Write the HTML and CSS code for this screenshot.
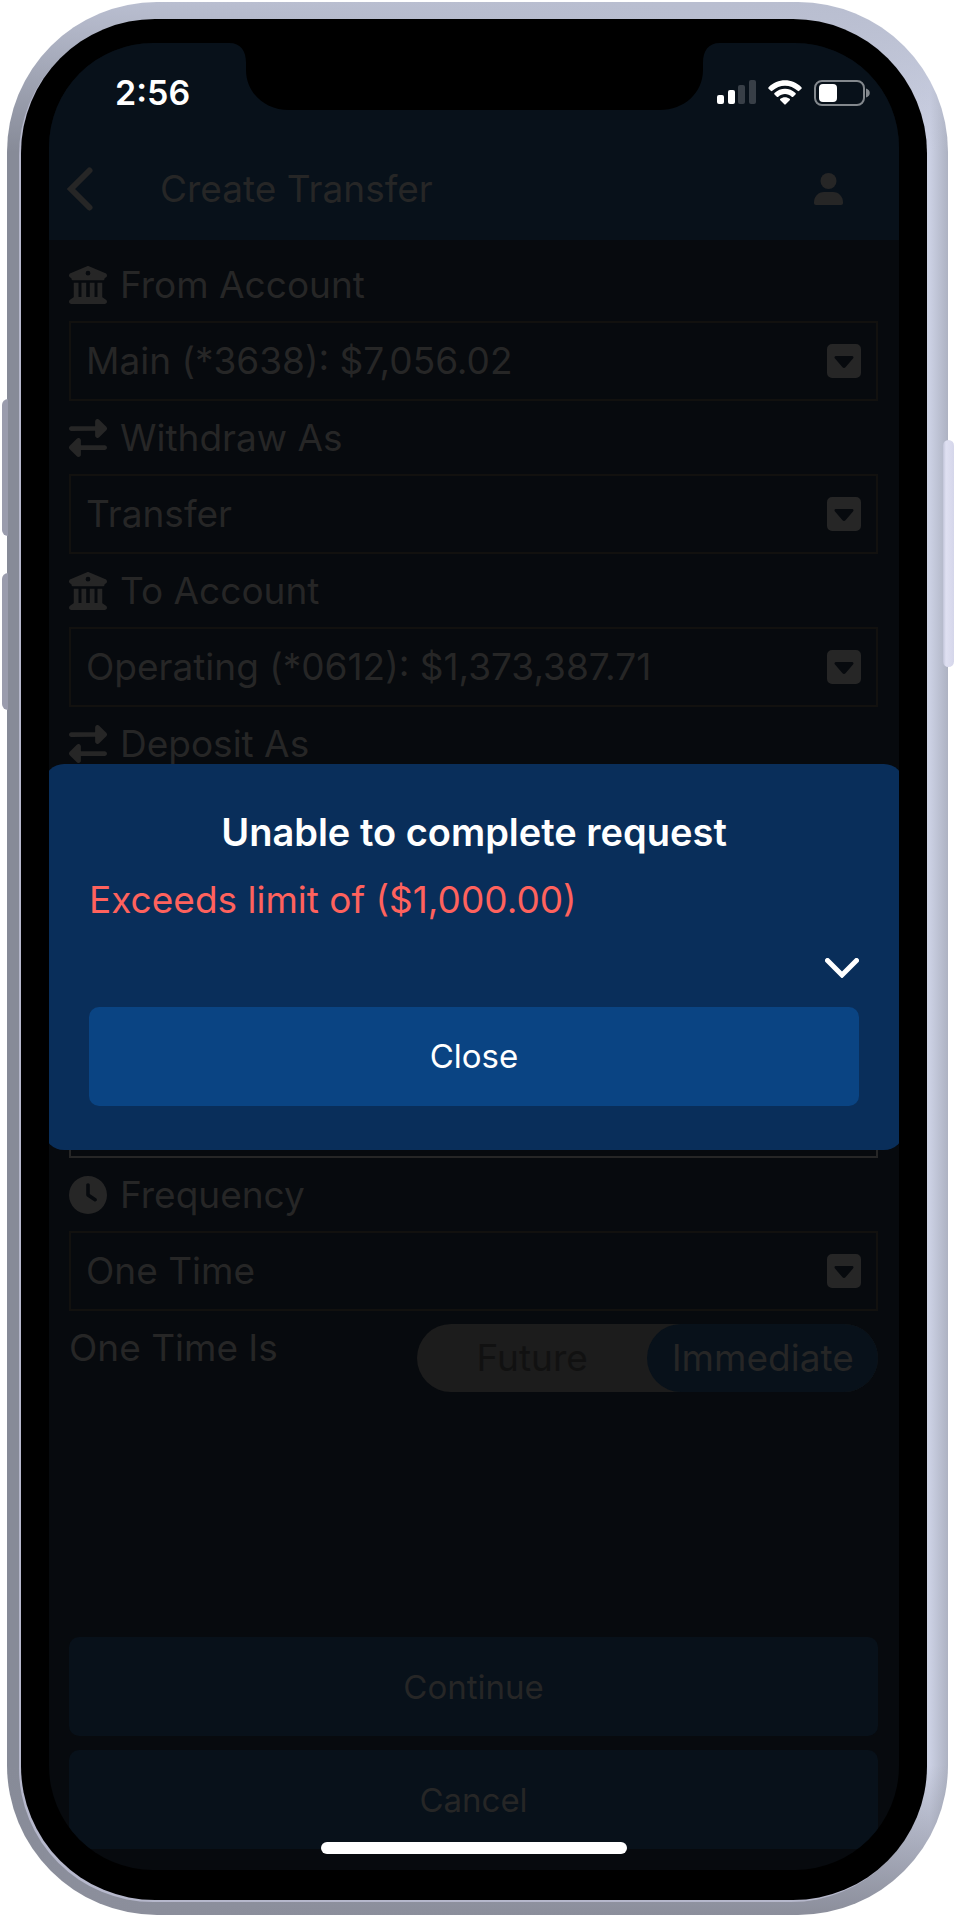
FILE: index.html
```html
<!DOCTYPE html>
<html lang="en">
<head>
	<meta charset="UTF-8">
	<meta name="viewport" content="width=device-width, initial-scale=1">
	<title>Create Transfer</title>
	<link rel="stylesheet" href="styles.css">
</head>
<body>
<!-- shared icons -->
<svg class="sprite" aria-hidden="true">
	<symbol id="bank" viewBox="0 0 512 512"><path d="M243.4 2.6l-224 96c-14 6-21.8 21-18.7 35.8S16.8 160 32 160v8c0 13.3 10.7 24 24 24H456c13.3 0 24-10.7 24-24v-8c15.2 0 28.3-10.7 31.3-25.6s-4.8-29.9-18.7-35.8l-224-96c-8-3.4-17.2-3.4-25.2 0zM128 224H64V420.3c-.6 .3-1.2 .7-1.8 1.1l-48 32c-11.7 7.8-17 22.4-12.9 35.9S17.9 512 32 512H480c14.1 0 26.5-9.2 30.6-22.7s-1.1-28.1-12.9-35.9l-48-32c-.6-.4-1.2-.7-1.8-1.1V224H384V416H344V224H280V416H232V224H168V416H128V224zM256 64a32 32 0 1 1 0 64 32 32 0 1 1 0-64z"/></symbol>
	<symbol id="swap" viewBox="0 0 512 512"><path d="M32 96l320 0 0-64c0-12.9 7.8-24.6 19.8-29.6s25.7-2.2 34.9 6.9l96 96c6 6 9.4 14.1 9.4 22.6s-3.4 16.6-9.4 22.6l-96 96c-9.2 9.2-22.9 11.9-34.9 6.9s-19.8-16.6-19.8-29.6l0-64L32 160c-17.7 0-32-14.3-32-32s14.3-32 32-32zM480 352c17.7 0 32 14.3 32 32s-14.3 32-32 32H160v64c0 12.9-7.8 24.6-19.8 29.6s-25.7 2.2-34.9-6.9l-96-96c-6-6-9.4-14.1-9.4-22.6s3.4-16.6 9.4-22.6l96-96c9.2-9.2 22.9-11.9 34.9-6.9s19.8 16.6 19.8 29.6l0 64H480z"/></symbol>
	<symbol id="clock" viewBox="0 0 512 512"><path d="M256 0a256 256 0 1 1 0 512A256 256 0 1 1 256 0zM232 120V256c0 8 4 15.5 10.7 20l96 64c11 7.4 25.9 4.4 33.3-6.7s4.4-25.9-6.7-33.3L280 243.2V120c0-13.3-10.7-24-24-24s-24 10.7-24 24z"/></symbol>
	<symbol id="caret" viewBox="0 0 34 34"><path fill-rule="evenodd" d="M5 0H29a5 5 0 0 1 5 5V29a5 5 0 0 1-5 5H5a5 5 0 0 1-5-5V5a5 5 0 0 1 5-5zM9 12C7.500 12 7 13.500 8 14.600L15.500 23.200C16.500 24.300 17.500 24.300 18.500 23.200L26 14.600C27 13.500 26.500 12 25 12z"/></symbol>
</svg>

<div class="phone">
	<span class="side_btn vol_up"></span>
	<span class="side_btn vol_down"></span>
	<span class="side_btn power"></span>
	<div class="bezel">
		<div class="screen">
			<div class="status">
				<span class="time">2:56</span>
				<svg class="notch" viewBox="0 0 491 67"><path d="M0 0C12 0 17 8 17 20V27C17 50 36 67 60 67H431C455 67 474 50 474 27V20C474 8 479 0 491 0z"/></svg>
				<div class="status_icons">
					<svg width="39" height="25" viewBox="0 0 39 25">
						<rect x="0" y="15" width="7" height="9" rx="2" fill="#fff"/>
						<rect x="11" y="10" width="7" height="14" rx="2" fill="#fff"/>
						<rect x="21" y="5" width="7" height="19" rx="2" fill="#383f47"/>
						<rect x="32" y="0" width="7" height="24" rx="2" fill="#383f47"/>
					</svg>
					<svg width="34" height="25" viewBox="0 0 34 25" fill="#fff">
						<path d="M0.600 7.200C9.500-2.100 24.500-2.100 33.400 7.200C33.900 7.700 33.900 8.200 33.400 8.700L31.200 10.800C30.700 11.300 30.200 11.300 29.700 10.800C22.500 3.900 11.500 3.900 4.300 10.800C3.800 11.300 3.300 11.300 2.800 10.800L0.600 8.700C0.100 8.200 0.100 7.700 0.600 7.200z"/>
						<path d="M6.500 13C12.400 7.200 21.600 7.200 27.500 13C28 13.500 28 14 27.500 14.500L25.200 16.700C24.700 17.100 24.200 17.100 23.700 16.700C19.900 13.200 14.100 13.200 10.300 16.700C9.800 17.100 9.300 17.100 8.800 16.700L6.500 14.500C6 14 6 13.500 6.500 13z"/>
						<path d="M12.300 18.800C15 16.600 19 16.600 21.700 18.800C22.200 19.300 22.200 19.800 21.700 20.300L17.700 24.300C17.200 24.800 16.800 24.800 16.300 24.300L12.300 20.300C11.800 19.800 11.800 19.300 12.300 18.800z"/>
					</svg>
					<svg width="56" height="26" viewBox="0 0 56 26">
						<rect x="1" y="1" width="49" height="24" rx="7" fill="none" stroke="#83888d" stroke-width="2"/>
						<rect x="5" y="4" width="18" height="18" rx="4" fill="#fff"/>
						<path d="M52 8.500C57 10 57 16 52 17.500z" fill="#83888d"/>
					</svg>
				</div>
			</div>

			<header class="header">
				<button class="icon_btn" type="button" aria-label="Back">
					<svg width="26" height="44" viewBox="0 0 26 44"><path d="M22.500 3.500L4 22L22.500 40.500" fill="none" stroke="#262626" stroke-width="6" stroke-linecap="round"/></svg>
				</button>
				<h1>Create Transfer</h1>
				<button class="icon_btn" type="button" aria-label="Profile">
					<svg width="29" height="32" viewBox="0 0 29 32" fill="#262626"><circle cx="14.500" cy="8" r="8"/><path d="M10 19H19C25 19 29 24 29 29V30C29 31.300 28.300 32 27 32H2C.7 32 0 31.300 0 30V29C0 24 4 19 10 19z"/></svg>
				</button>
			</header>

			<form class="form">
				<label class="label" for="from"><svg><use href="#bank"/></svg>From Account</label>
				<div class="select">
					<select id="from"><option>Main (*3638): $7,056.02</option></select>
					<svg><use href="#caret"/></svg>
				</div>
				<label class="label" for="withdraw"><svg><use href="#swap"/></svg>Withdraw As</label>
				<div class="select">
					<select id="withdraw"><option>Transfer</option></select>
					<svg><use href="#caret"/></svg>
				</div>
				<label class="label" for="to"><svg><use href="#bank"/></svg>To Account</label>
				<div class="select">
					<select id="to"><option>Operating (*0612): $1,373,387.71</option></select>
					<svg><use href="#caret"/></svg>
				</div>
				<label class="label" for="deposit"><svg><use href="#swap"/></svg>Deposit As</label>
				<div class="select">
					<select id="deposit"></select>
					<svg><use href="#caret"/></svg>
				</div>
				<textarea class="memo" aria-label="Memo"></textarea>
				<label class="label" for="frequency"><svg><use href="#clock"/></svg>Frequency</label>
				<div class="select">
					<select id="frequency"><option>One Time</option></select>
					<svg><use href="#caret"/></svg>
				</div>
				<div class="when">
					<span class="label" id="whenLabel">One Time Is</span>
					<div class="toggle" role="radiogroup" aria-labelledby="whenLabel">
						<input type="radio" name="when" id="future"><label for="future">Future</label>
						<input type="radio" name="when" id="immediate" checked><label for="immediate">Immediate</label>
					</div>
				</div>
				<div class="actions">
					<button class="btn" type="button">Continue</button>
					<button class="btn" type="button">Cancel</button>
				</div>
			</form>

			<div class="overlay">
				<div class="dialog" role="alertdialog" aria-labelledby="dialogTitle">
					<h2 id="dialogTitle">Unable to complete request</h2>
					<p>Exceeds limit of ($1,000.00)</p>
					<button class="icon_btn more" type="button" aria-label="Details">
						<svg width="34" height="20" viewBox="0 0 34 20"><path d="M2.500 2.500L17 17L31.500 2.500" fill="none" stroke="#fff" stroke-width="5" stroke-linecap="round"/></svg>
					</button>
					<button class="btn btn_close" type="button">Close</button>
				</div>
			</div>
			<span class="home"></span>
		</div>
	</div>
</div>
</body>
</html>
```

FILE: styles.css
```css
*{margin:0;padding:0;box-sizing:border-box;}
body{background:#fff;color:#262626;font-family:Inter,"Liberation Sans",sans-serif;font-size:37px;line-height:48px;}
button,select,textarea{font:inherit;color:inherit;border:0;background:none;}
svg{display:block;}
.sprite{position:absolute;width:0;height:0;}

/* handset */
.phone{position:relative;margin:2px 6px 4px 7px;padding:17px 21px 15px 14px;border-radius:150px;background:linear-gradient(to bottom,#b9bed0,rgba(185,190,208,0) 150px),linear-gradient(to top,#8b8e9b,rgba(139,142,155,0) 150px),linear-gradient(to right,#878b98 20px,#cbd0e3 calc(100% - 18px),#adb2c2);}
.bezel{padding:24px 28px 30px;border-radius:134px;background:#000;box-shadow:-2px 2px 0 #b6b8cc;}
.side_btn{position:absolute;border-radius:8px 0 0 8px;background:#9a9cad;left:-5px;width:6px;height:137px;}
.vol_up{top:397px;}
.vol_down{top:571px;}
.power{top:438px;left:auto;right:-6px;width:11px;height:227px;border-radius:6px;background:linear-gradient(to right,#c2c5da,#dfe0f2 3px,#d5d6ea);}

.screen{position:relative;display:flex;flex-direction:column;min-height:calc(100vh - 92px);border-radius:104px;overflow:hidden;background:#070a0e;}

/* status bar */
.status{display:grid;grid-template-columns:1fr 457px 1fr;height:67px;background:#08111a;}
.time{padding:26px 0 0 66px;color:#fff;font-size:34px;font-weight:600;line-height:48px;}
.notch{width:491px;height:67px;margin-left:-17px;}
.status_icons{display:flex;align-items:flex-start;gap:12px;padding:37px 0 0 14px;}

.header{display:flex;align-items:center;height:130px;padding:28px 56px 0 18px;background:#08111a;}
.header h1{flex:1;margin-left:67px;font-size:37px;font-weight:400;}
.icon_btn{cursor:pointer;}

/* form */
.form{flex:1;display:flex;flex-direction:column;padding:8px 21px 21px 20px;}
.label{display:flex;align-items:center;gap:13px;height:73px;}
.label svg{width:38px;height:38px;fill:#262626;}
.select{display:grid;align-items:center;}
.select select,.select svg{grid-area:1/1;}
.select select{width:100%;height:80px;padding:0 60px 0 15px;border:2px solid #12110f;appearance:none;}
.select svg{justify-self:end;width:34px;height:34px;margin-right:17px;fill:#262626;pointer-events:none;}
.memo{height:225px;margin-top:73px;border:2px solid #262626;resize:none;}

.when{display:flex;justify-content:space-between;}
.toggle{display:grid;grid-template-columns:1fr 1fr;width:57%;height:68px;margin-top:13px;border-radius:34px;background:#1c1c1c;color:#111;}
.toggle input{position:absolute;opacity:0;}
.toggle label{border-radius:34px;line-height:68px;text-align:center;}
.toggle input:checked + label{background:#08111a;color:#262626;}

.actions{display:flex;flex-direction:column;gap:14px;margin-top:auto;}
.btn{width:100%;height:99px;border-radius:10px;background:#08111a;font-size:33px;cursor:pointer;}

/* error dialog */
.overlay{position:absolute;inset:0;display:flex;align-items:center;}
.dialog{flex:1;display:flex;flex-direction:column;margin:0 -5px;padding:44px 45px;border-radius:20px;background:#092e5a;color:#fff;}
.dialog h2{font-size:38px;font-weight:600;text-align:center;}
.dialog p{margin-top:20px;color:#ff625d;}
.more{align-self:flex-end;margin-top:34px;}
.btn_close{margin-top:29px;background:#0a4483;}

.home{position:absolute;left:50%;bottom:16px;width:306px;height:12px;margin-left:-153px;border-radius:6px;background:#fff;}
```
